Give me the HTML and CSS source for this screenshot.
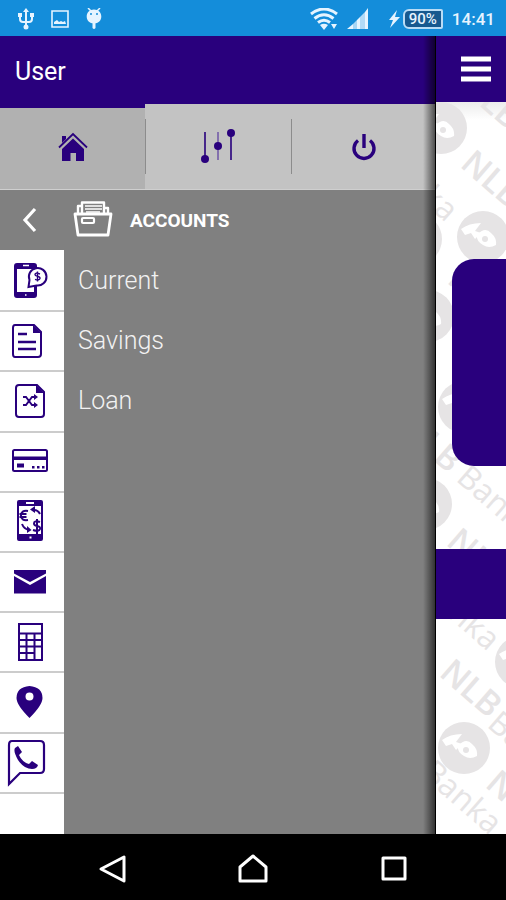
FILE: index.html
```html
<!DOCTYPE html>
<html lang="en">
<head>
<meta charset="utf-8">
<meta name="viewport" content="width=device-width, initial-scale=1">
<title>Accounts</title>
<link rel="stylesheet" href="styles.css">
</head>
<body>
<div class="screen">
  <header class="status">
    <div class="status-group status-left">
      <svg width="16" height="22" viewBox="0 0 16 22" fill="none" stroke="currentColor" stroke-width="2"><path d="M8 3v16M2 7v4q0 3 3 3h6q3 0 3-3V7"/><path d="M8 0l3 4H5zM0 5h4v4H0zM12 5h4v4h-4z" fill="currentColor" stroke="none"/><circle cx="8" cy="19" r="2.5" fill="currentColor" stroke="none"/></svg>
      <svg width="18" height="18" viewBox="0 0 18 18"><path d="M1 1h16v16H1z" fill="none" stroke="currentColor" stroke-width="1.6"/><path d="M3 14v-2l3-2 2 2 2-1 2 1 2-1 1 3z" fill="currentColor"/></svg>
      <svg width="16" height="22" viewBox="0 0 16 22" fill="currentColor"><path d="M2 0l3 3M14 0l-3 3" stroke="currentColor" stroke-width="1.5"/><path fill-rule="evenodd" d="M8 1.500C3.500 1.500.700 4.500.700 8.500S3.500 15.500 8 15.500s7.300-3 7.300-7S12.500 1.500 8 1.500zM5 5a1 1 0 110 2 1 1 0 010-2zm6 0a1 1 0 110 2 1 1 0 010-2z"/><path d="M6.500 15h3v5q-1.500 2-3 0z"/></svg>
    </div>
    <div class="status-group">
      <svg width="28" height="22" viewBox="0 0 28 22" fill="none" stroke="currentColor" stroke-width="3"><path d="M1 6Q14-4 27 6M4.500 10.500Q14 3 23.500 10.500M8 14.500Q14 10 20 14.500"/><path d="M10 17q4-2.500 8 0l-4 5zM21 16h6l-3 5z" fill="currentColor" stroke="none"/></svg>
      <svg width="22" height="22" viewBox="0 0 22 22" fill="currentColor"><path d="M0 21l6-5v5z"/><path d="M6 16l4-4v9H6z" opacity=".7"/><path d="M10 12l3-3v12h-3z"/><path d="M13 9l5-5v17h-5z" opacity=".75"/><path d="M18 4l3-4v21h-3z"/></svg>
      <div class="battery">
        <svg width="11" height="18" viewBox="0 0 11 18" fill="currentColor"><path d="M8 0L0 10h4l-3 8 10-11H6z"/></svg>
        <span class="battery-level">90%</span>
      </div>
      <time class="clock">14:41</time>
    </div>
  </header>

  <main class="stage">
    <aside class="drawer">
      <h1 class="user">User</h1>
      <nav class="tabs" aria-label="Sections">
        <button class="tab tab-active" type="button" aria-label="Home">
          <svg width="30" height="30" viewBox="0 0 30 30" fill="#29007d"><path d="M4 17l11-10.500L26 17v12h-8v-8h-5.500v8H4z"/><path d="M1 15.500L15 2l14 13.500" fill="none" stroke="#29007d" stroke-width="1.800"/><path d="M4 4h4v3l-4 4z"/></svg>
        </button>
        <button class="tab" type="button" aria-label="Settings">
          <svg width="36" height="36" viewBox="0 0 36 36" fill="#29007d"><path d="M5 3v28M31 3v28" stroke="#29007d" stroke-width="1.600"/><path d="M18 3v28" stroke="#8370ad" stroke-width="2"/><circle cx="5" cy="30" r="4"/><circle cx="18" cy="17" r="4"/><circle cx="31" cy="4" r="4"/></svg>
        </button>
        <button class="tab" type="button" aria-label="Log out">
          <svg width="28" height="28" viewBox="0 0 28 28" fill="none" stroke="#29007d" stroke-width="3.400"><path d="M15 1v14M9 7.500a10 10 0 1 0 12 0"/></svg>
        </button>
      </nav>

      <div class="section-head">
        <button class="back" type="button" aria-label="Back">
          <svg width="16" height="26" viewBox="0 0 16 26" fill="none" stroke="#fff" stroke-width="3.200"><path d="M13 2L3 13l10 11"/></svg>
        </button>
        <svg width="40" height="38" viewBox="0 0 40 38" fill="none" stroke="#fff" stroke-width="2.800" stroke-linejoin="round"><path d="M2 13h36l-3 21H5z"/><path d="M5 13V5h4M35 13V7h-3M9 12V1.500h22V12" stroke-width="2.400"/><path d="M12 5h17M12 8h17M13 11h14" stroke-width="1.400"/><rect x="9" y="17" width="12" height="5" rx="1" stroke-width="2.200"/></svg>
        <h2 class="section-title">ACCOUNTS</h2>
      </div>

      <div class="columns">
        <nav class="rail" aria-label="Services">
          <a class="rail-item" href="#pay" aria-label="Mobile payments"><svg class="rail-icon" viewBox="0 0 48 48"><path fill-rule="evenodd" d="M11 7h17q3 0 3 3v29q0 3-3 3H11q-3 0-3-3V10q0-3 3-3zm0 6v23h17V13z"/><path d="M17 9.500h6M19 39h1.500" stroke="#fff" stroke-width="1.400"/><path d="M22.500 31l1-7a8.800 8.800 0 1 1 7 5.500z" fill="#fff" stroke="#29007d" stroke-width="2"/><path d="M34 18q-5-2-5 .800 0 1 2.500 1.500 2.500.500 2.500 2-.500 2.500-5 1M31.500 15.500v10" fill="none" stroke="#29007d" stroke-width="1.400"/></svg></a>
          <a class="rail-item" href="#statements" aria-label="Statements"><svg class="rail-icon" viewBox="0 0 48 48"><path d="M9 8h19l7 7v22q0 3-3 3H9q-2 0-2-3V11q0-3 2-3z" fill="none" stroke="#29007d" stroke-width="2"/><path d="M27 8v8h8z"/><path d="M12 17h9M12 25h18M12 32h18" stroke="#29007d" stroke-width="2.400"/></svg></a>
          <a class="rail-item" href="#transfers" aria-label="Transfers"><svg class="rail-icon" viewBox="0 0 48 48"><path d="M13 7h18l7 7v22q0 3-3 3H13q-3 0-3-3V10q0-3 3-3z" fill="none" stroke="#29007d" stroke-width="2"/><path d="M30 7v8h8z"/><path d="M17 19h3l6 8h3M17 27h3l6-8h3" fill="none" stroke="#29007d" stroke-width="1.900"/><path d="M28 16l4 3-4 3zM28 24l4 3-4 3z"/></svg></a>
          <a class="rail-item" href="#cards" aria-label="Cards"><svg class="rail-icon" viewBox="0 0 48 48"><rect x="7" y="12" width="34" height="21" rx="1.500" fill="none" stroke="#29007d" stroke-width="2"/><path d="M7 18.500h34v3.500H7zM11 25.500h7v4h-7zM26 28h2.500v2.500H26zM31 28h2.500v2.500H31zM36 28h2.500v2.500H36z"/></svg></a>
          <a class="rail-item" href="#exchange" aria-label="Currency exchange"><svg class="rail-icon" viewBox="0 0 48 48"><path fill-rule="evenodd" d="M13 2h22q2 0 2 2v37q0 2-2 2H13q-2 0-2-2V4q0-2 2-2zm0 6v28h22V8z"/><path d="M20 5h8M23.500 39.500h2" stroke="#fff" stroke-width="2"/><path d="M22 13q-7-1-7 4.500T22 22M13.500 16h7M13.500 19h7M34 24q-6-2-6 1.500 0 2 3 2.500 3.500.500 3 3-1 3-7 1M31 21v15M34 16q-2-4-6-4M16 26q2 5 7 6" fill="none" stroke="#29007d" stroke-width="2"/><path d="M29 8v7l-5-3.500zM21 28l4.500 4-4.500 3z"/></svg></a>
          <a class="rail-item" href="#messages" aria-label="Messages"><svg class="rail-icon" viewBox="0 0 48 48"><path d="M8 12h32v3.500L24 24 8 15.500z"/><path d="M8 18l16 9 16-9v17.500H8z"/></svg></a>
          <a class="rail-item" href="#calculator" aria-label="Calculator"><svg class="rail-icon" viewBox="0 0 48 48"><path d="M13 6h23v36H13zM13 15.500h23M13 22h23M13 28.500h23M13 35h15.500M20.500 15.500V42M28.500 15.500V42" fill="none" stroke="#29007d" stroke-width="2"/></svg></a>
          <a class="rail-item" href="#branches" aria-label="Branches"><svg class="rail-icon" viewBox="0 0 48 48"><path fill-rule="evenodd" d="M23.500 7Q36.500 8 36.500 19 36.500 26 23.500 39 10.500 26 10.500 19 10.500 8 23.500 7zm0 6.500a4 4 0 1 0 0 8 4 4 0 0 0 0-8z"/></svg></a>
          <a class="rail-item" href="#contact" aria-label="Contact"><svg class="rail-icon" viewBox="0 0 48 48"><path d="M6 2h28q4 0 4 4v24q0 4-4 4H14L3 45V6q0-4 3-4z" fill="none" stroke="#29007d" stroke-width="2.200"/><path d="M12 7l4 6-3 3q3 7 10 9l3-3 6 4q-1 4-6 4Q18 30 12 21 7 12 9 9z"/></svg></a>
          <span class="rail-item"></span>
        </nav>
        <ul class="menu">
          <li><a class="menu-link" href="#current">Current</a></li>
          <li><a class="menu-link" href="#savings">Savings</a></li>
          <li><a class="menu-link" href="#loan">Loan</a></li>
        </ul>
      </div>
    </aside>

    <section class="page" aria-label="Page">
      <div class="page-bar">
        <button class="burger" type="button" aria-label="Menu">
          <svg width="30" height="26" viewBox="0 0 30 26" stroke="#fff" stroke-width="5"><path d="M0 3h30M0 13h30M0 23h30"/></svg>
        </button>
      </div>
      <div class="page-body">
        <svg class="watermark" width="70" height="732" viewBox="0 0 70 732" aria-hidden="true">
          <defs>
            <g id="mark"><circle r="26"/><path d="M-22-8q8-6 20-6L-8-6-2-4-8 2-12-4-18-2zM-6-2q8-9 14-2 6 5 5 12-7 4-13 0-7-4-6-10z" fill="#fff"/><circle cx="2" cy="2" r="3"/></g>
          </defs>
          <use href="#mark" x="5" y="26"/>
          <use href="#mark" x="47" y="135"/>
          <use href="#mark" x="-20" y="137"/>
          <use href="#mark" x="-8" y="214"/>
          <use href="#mark" x="28" y="305"/>
          <use href="#mark" x="-10" y="402"/>
          <use href="#mark" x="85" y="560"/>
          <use href="#mark" x="28" y="646"/>
          <g class="mark-bold">
            <text transform="translate(23 64) rotate(41)">NLB</text>
            <text transform="translate(22 -15) rotate(41)">NLB</text>
            <text transform="translate(10 180) rotate(41)">NLB</text>
            <text transform="translate(-38 328) rotate(41)">NLB</text>
            <text transform="translate(9 442) rotate(41)">NLB</text>
            <text transform="translate(2 573) rotate(41)">NLB</text>
            <text transform="translate(48 684) rotate(41)">NLB</text>
          </g>
          <g class="mark-light">
            <text transform="translate(-60 60) rotate(41)">Banka</text>
            <text transform="translate(19 378) rotate(41)">Banka</text>
            <text transform="translate(-18 489) rotate(41)">Banka</text>
            <text transform="translate(50 624) rotate(41)">Banka</text>
            <text transform="translate(-16 673) rotate(41)">Banka</text>
          </g>
        </svg>
        <div class="card"></div>
        <div class="band"></div>
      </div>
    </section>
  </main>

  <footer class="softkeys">
    <button class="softkey" type="button" aria-label="Back"><svg width="30" height="30" viewBox="0 0 30 30"><path d="M26 3v24L3 15z"/></svg></button>
    <button class="softkey" type="button" aria-label="Home"><svg width="30" height="30" viewBox="0 0 30 30"><path d="M15 2l13 11v14H2V13z"/></svg></button>
    <button class="softkey" type="button" aria-label="Recent apps"><svg width="30" height="30" viewBox="0 0 30 30"><path d="M5 4h22v21H5z"/></svg></button>
  </footer>
</div>
</body>
</html>
```
FILE: styles.css
```css
* {
  box-sizing: border-box;
}

body {
  margin: 0;
  font-family: Roboto, "Liberation Sans", sans-serif;
  color: #fff;
  background: #000;
}

button {
  margin: 0;
  padding: 0;
  border: 0;
  background: none;
  font: inherit;
  color: inherit;
}

svg {
  display: block;
  flex: none;
}

.screen {
  display: flex;
  flex-direction: column;
  min-height: 100vh;
}

/* Status bar */
.status {
  display: flex;
  justify-content: space-between;
  height: 36px;
  padding: 2px 11px 0 18px;
  background: #148dda;
  color: #e6f4ff;
}

.status-group {
  display: flex;
  align-items: center;
  gap: 9px;
}

.status-left {
  gap: 17px;
}

.battery {
  display: flex;
  align-items: center;
  gap: 3px;
  margin-left: 11px;
}

.battery-level {
  padding: 0 4px;
  border: 2px solid #b9dcf5;
  border-radius: 6px 2px 2px 6px;
  background: #17598f;
  font-size: 15px;
  font-weight: 500;
  line-height: 16px;
}

.clock {
  font-size: 17px;
  font-weight: 500;
}

/* Drawer beside the page it uncovers */
.stage {
  display: flex;
  flex: 1;
}

.drawer {
  position: relative;
  display: flex;
  flex: 1;
  flex-direction: column;
  background: #808080;
}

.drawer::after {
  content: "";
  position: absolute;
  inset: 0 0 0 auto;
  width: 12px;
  border-right: 1px solid #000;
  background: linear-gradient(to right, transparent, rgba(0, 0, 0, 0.6));
  pointer-events: none;
}

.user {
  margin: 0;
  padding: 4px 15px 0;
  background: #29007d;
  font-size: 25px;
  font-weight: 400;
  line-height: 64px;
}

.tabs {
  display: grid;
  grid-template-columns: repeat(3, 1fr);
  height: 86px;
  border-bottom: 1px solid #cfcfcf;
  background: #c3c3c3;
}

.tab {
  position: relative;
  display: flex;
  align-items: center;
  justify-content: center;
}

.tab-active {
  padding-bottom: 4px;
  border-top: 4px solid #29007d;
  background: #b1b1b1;
}

.tab + .tab::before {
  content: "";
  position: absolute;
  inset: 15px auto 15px 0;
  width: 1px;
  background: #8c8c8c;
}

.section-head {
  display: flex;
  align-items: center;
  height: 60px;
  padding-left: 22px;
}

.back {
  margin-right: 35px;
}

.section-title {
  margin: 0 0 0 17px;
  font-size: 19px;
  font-weight: 700;
}

.columns {
  display: flex;
  flex: 1;
}

.rail {
  display: grid;
  grid-template-rows: repeat(9, 60fr) 42fr;
  width: 64px;
  background: #fff;
}

.rail-item {
  display: flex;
  align-items: center;
  padding-left: 6px;
}

.rail-item + .rail-item {
  border-top: 2px solid #cccccc;
}

.rail-icon {
  width: 48px;
  height: 48px;
  fill: #29007d;
}

.menu {
  flex: 1;
  margin: 0;
  padding: 1px 0 0 14px;
  list-style: none;
}

.menu-link {
  display: block;
  color: #f2f2f2;
  font-size: 25px;
  font-weight: 300;
  line-height: 60px;
  text-decoration: none;
}

/* Uncovered strip of the page */
.page {
  display: flex;
  flex-direction: column;
  width: 70px;
  overflow: hidden;
}

.page-bar {
  display: flex;
  align-items: center;
  height: 66px;
  padding-left: 25px;
  background: #29007d;
}

.page-body {
  position: relative;
  flex: 1;
  padding-top: 157px;
  background: linear-gradient(#ececec, #fff 18px);
}

.watermark {
  position: absolute;
  inset: 0 auto auto 0;
  fill: #e6e4e5;
  font-family: "Open Sans", "Noto Sans", sans-serif;
}

.mark-bold {
  font-size: 34px;
  font-weight: 600;
}

.mark-light {
  font-size: 32px;
}

.card {
  position: relative;
  height: 207px;
  margin-left: 16px;
  border-radius: 22px 0 0 22px;
  background: #29007d;
}

.band {
  position: relative;
  height: 70px;
  margin-top: 83px;
  background: #29007d;
}

/* System navigation */
.softkeys {
  display: grid;
  grid-template-columns: repeat(3, 1fr);
  height: 66px;
  padding: 0 43px;
  background: #000;
}

.softkey {
  display: flex;
  align-items: center;
  justify-content: center;
  padding-top: 4px;
}

.softkey svg {
  fill: none;
  stroke: #fff;
  stroke-width: 3;
  stroke-linejoin: round;
}
```
